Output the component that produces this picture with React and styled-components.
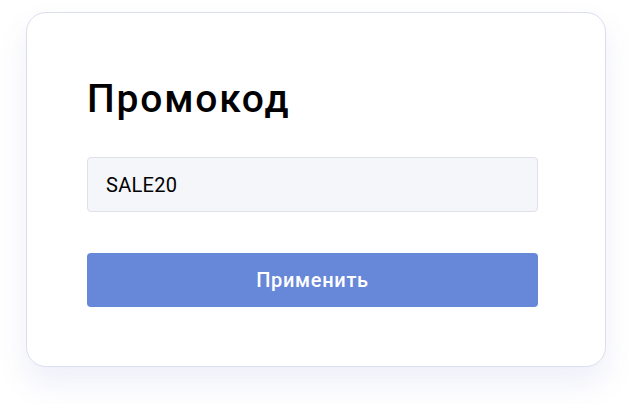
import React from "react";
import styled, { createGlobalStyle } from "styled-components";

const Global = createGlobalStyle`
  html, body { margin: 0; padding: 0; background: #ffffff; }
  body { font-family: Roboto, "Noto Sans", sans-serif; }
  * { box-sizing: border-box; }
`;

const Page = styled.div`
  min-height: 404px;
  padding: 12px 0 0 26px;
`;

const Card = styled.div`
  width: 580px;
  height: 355px;
  background: #ffffff;
  border: 1px solid #dcdeee;
  border-radius: 20px;
  box-shadow: 0 16px 30px rgba(85, 100, 195, 0.1);
  padding: 61px 0 0 60px;
  display: flex;
  flex-direction: column;
`;

const Title = styled.h1`
  margin: 0;
  font-size: 39px;
  font-weight: 500;
  letter-spacing: 1.8px;
  color: #000;
  line-height: 50px;
`;

const Input = styled.input`
  margin-top: 33px;
  width: 451px;
  height: 55px;
  padding: 0 18px;
  background: #f5f6fa;
  border: 1px solid #dfe1e8;
  border-radius: 4px;
  font-family: Roboto, sans-serif;
  font-size: 20px;
  letter-spacing: 0.3px;
  color: #000;
  outline: none;
`;

const Button = styled.button`
  margin-top: 41px;
  width: 451px;
  height: 54px;
  background: #6787d8;
  border: none;
  border-radius: 4px;
  color: #fff;
  font-family: Roboto, sans-serif;
  font-size: 20px;
  font-weight: 500;
  letter-spacing: 0.7px;
  cursor: pointer;
`;

export default function App() {
  return (
    <>
      <Global />
      <Page>
        <Card>
          <Title>Промокод</Title>
          <Input defaultValue="SALE20" />
          <Button>Применить</Button>
        </Card>
      </Page>
    </>
  );
}
